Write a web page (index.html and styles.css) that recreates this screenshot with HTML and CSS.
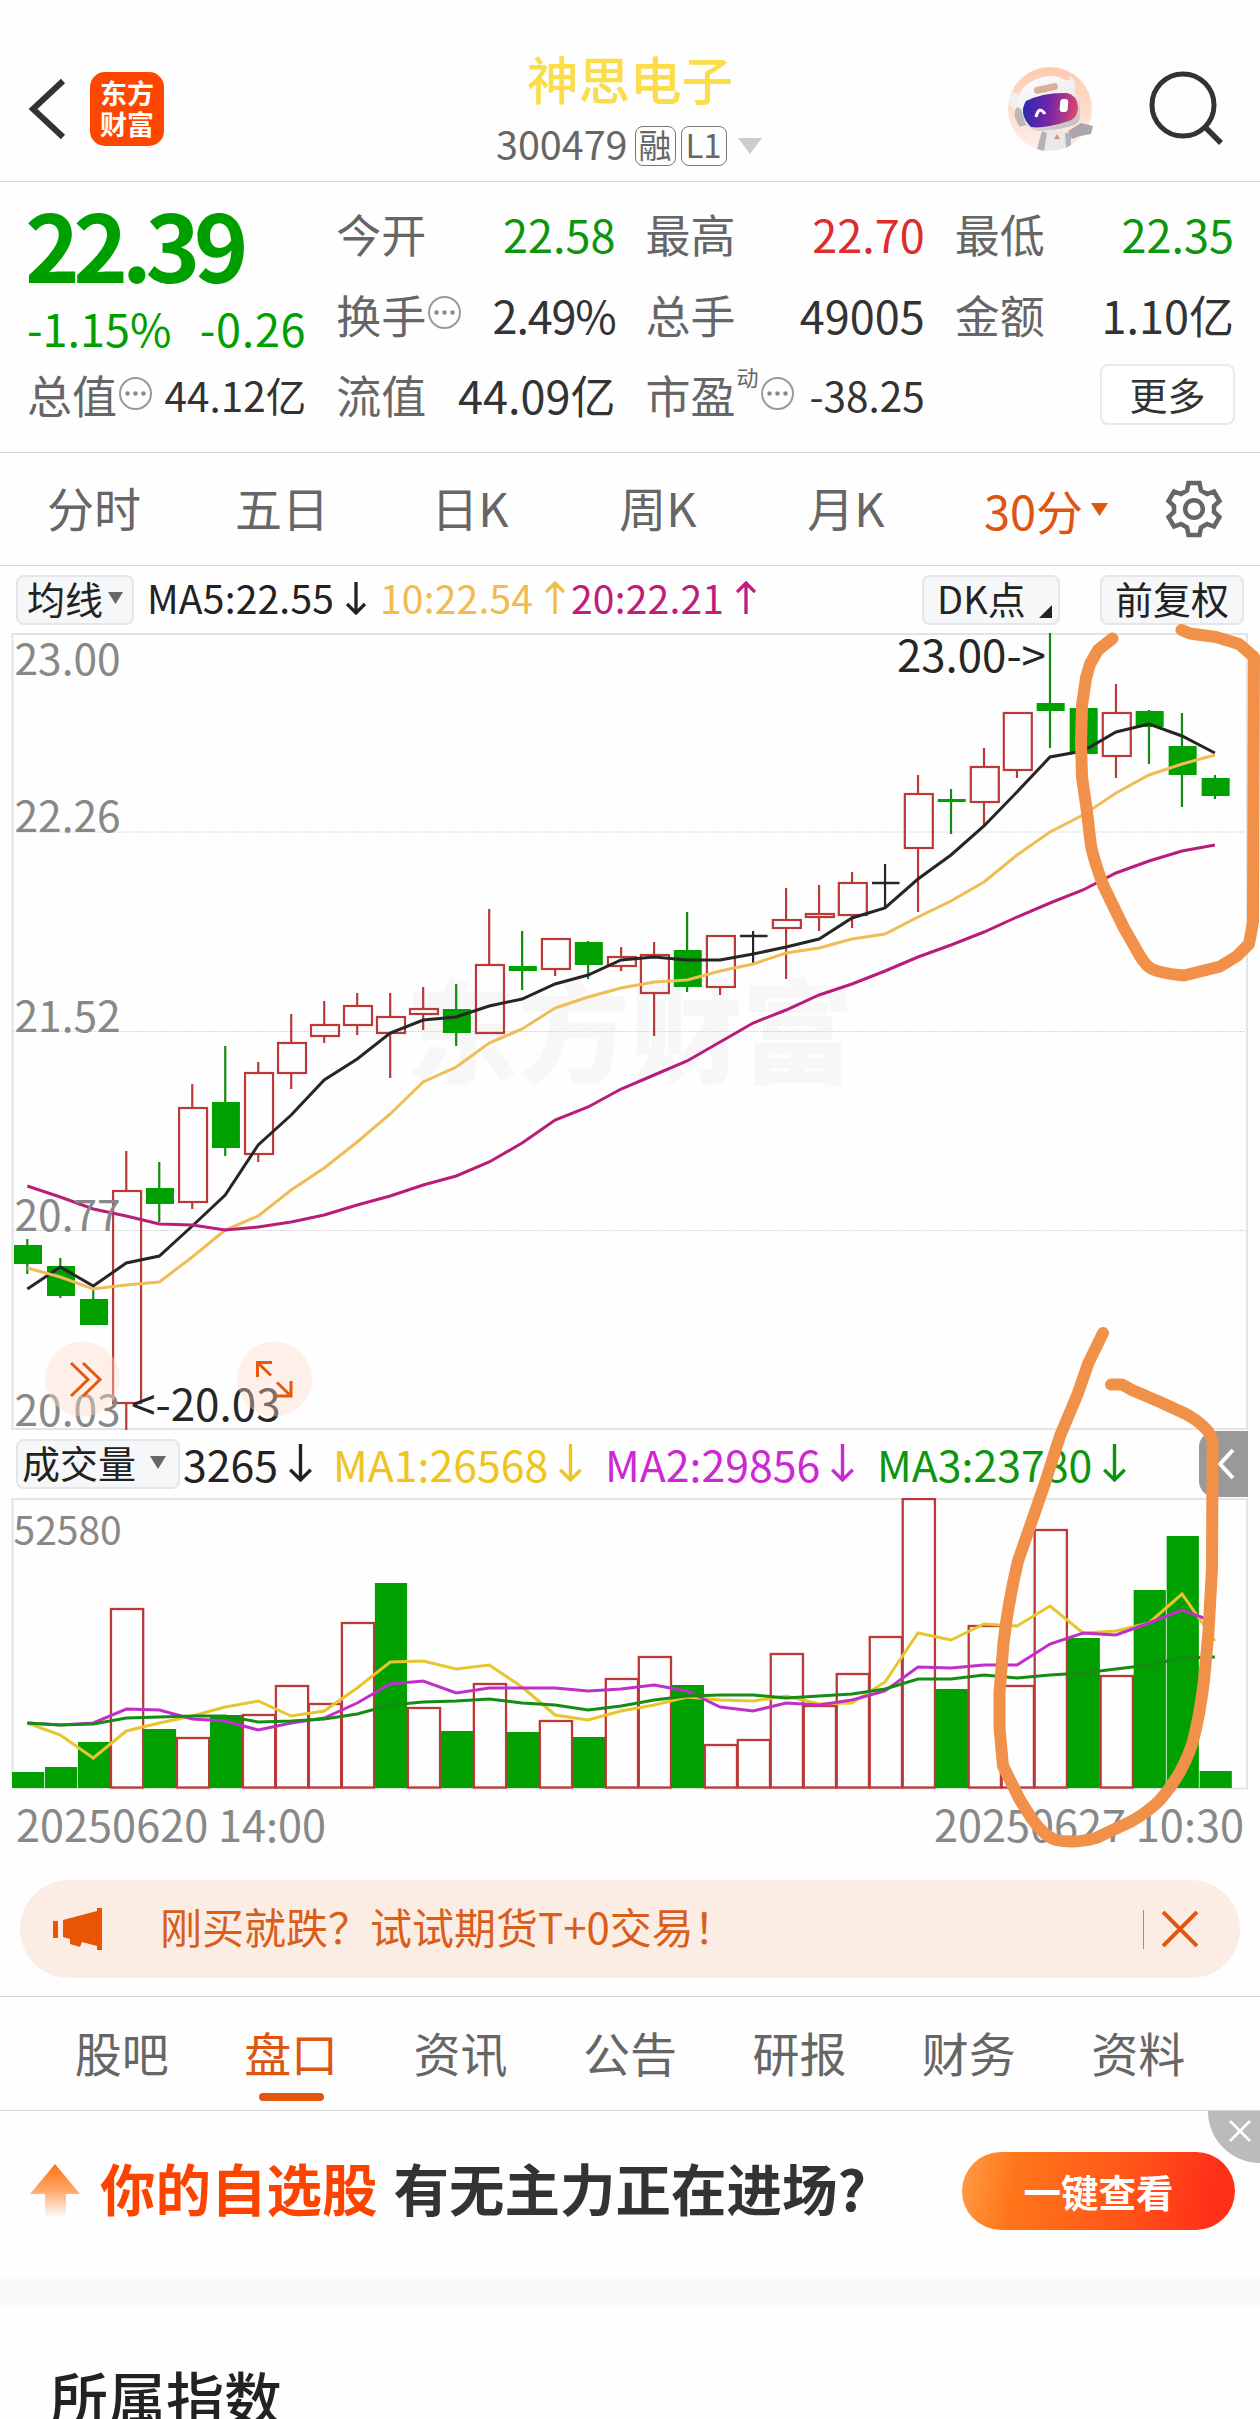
FILE: index.html
```html
<!DOCTYPE html>
<html lang="zh-CN">
<head>
    <meta charset="UTF-8">
    <meta name="viewport" content="width=device-width, initial-scale=1.0">
    <title>神思电子 300479</title>
    <link rel="stylesheet" href="styles.css">
</head>
<body>
    <header class="top-bar">
        <svg class="back" width="42" height="66" viewBox="0 0 42 66"><path d="M36 5L6 33L36 61" fill="none" stroke="#333" stroke-width="6"/></svg>
        <div class="logo">东方<br>财富</div>
        <div class="stock">
            <h1>神思电子</h1>
            <div class="code">
                <span class="num">300479</span>
                <span class="tag">融</span>
                <span class="tag tag-l1">L1</span>
                <svg class="caret" width="24" height="16" viewBox="0 0 24 16"><path d="M0 0H24L12 16Z" fill="#ccc"/></svg>
            </div>
        </div>
        <svg class="robot" width="88" height="88" viewBox="0 0 88 88">
            <defs>
                <linearGradient id="halo" x1="0" y1="0" x2="0" y2="1"><stop offset="0" stop-color="#ffc9ae"/><stop offset="1" stop-color="#fff0e8"/></linearGradient>
                <linearGradient id="visor" x1="0" y1="0.4" x2="1" y2="0.5"><stop offset="0" stop-color="#2a2bb0"/><stop offset="0.5" stop-color="#7a25a5"/><stop offset="1" stop-color="#dd4a6c"/></linearGradient>
                <linearGradient id="shell" x1="0" y1="0" x2="0.6" y2="1"><stop offset="0" stop-color="#fff"/><stop offset="0.6" stop-color="#efeeef"/><stop offset="1" stop-color="#c6c3c6"/></linearGradient>
            </defs>
            <circle cx="44" cy="44" r="42" fill="url(#halo)"/>
            <path d="M5 27Q-1 37 9 45L17 36L11 28ZM58 14Q66 18 63 10Q72 16 68 28Z" fill="#f1eff0"/>
            <path d="M36 66L30 84Q44 88 62 82L64 66Z" fill="#ebe8e9"/>
            <path d="M36 66L31 84L38 86L41 68ZM59 68L60 83L65 80L65 68Z" fill="#b7b2b6"/>
            <path d="M62 66L75 58L87 61L85 69L74 71L66 74Z" fill="#aaa6ab"/>
            <path d="M34 13Q54 6 65 22Q78 37 73 56Q68 64 31 66Q12 59 11 43Q10 20 34 13Z" fill="url(#shell)"/>
            <path d="M11 42Q5 50 14 62L20 60L15 44Z" fill="#bbb7bd"/>
            <rect x="28" y="20" width="24" height="7" rx="3" transform="rotate(-12 40 24)" fill="#d9b097"/>
            <path d="M20 36Q38 27 61 28Q71 30 72 42Q72 53 63 56Q38 64 25 62Q12 49 20 36Z" fill="url(#visor)"/>
            <path d="M30 52Q33 40 39 49" fill="none" stroke="#fff" stroke-width="3"/>
            <rect x="54" y="34" width="8" height="13" rx="3" fill="#fff" transform="rotate(5 58 40)"/>
            <path d="M51 69l3 5h-6Z" fill="#d99468"/>
        </svg>
        <svg class="search" width="76" height="76" viewBox="0 0 76 76"><circle cx="35" cy="35" r="31" fill="none" stroke="#333" stroke-width="5"/><path d="M57 57L73 73" stroke="#333" stroke-width="5.5"/></svg>
    </header>

    <section class="quote">
        <div class="price">
            <div class="price-now">22.39</div>
            <div class="price-change"><span>-1.15%</span><span>-0.26</span></div>
        </div>
        <div class="cell"><label>今开</label><b class="down">22.58</b></div>
        <div class="cell"><label>最高</label><b class="up">22.70</b></div>
        <div class="cell"><label>最低</label><b class="down">22.35</b></div>
        <div class="cell"><label>换手</label><i class="more-dot"></i><b class="pct">2.49%</b></div>
        <div class="cell"><label>总手</label><b>49005</b></div>
        <div class="cell"><label>金额</label><b>1.10亿</b></div>
        <div class="cell small"><label>总值</label><i class="more-dot"></i><b>44.12亿</b></div>
        <div class="cell"><label>流值</label><b>44.09亿</b></div>
        <div class="cell small"><label>市盈</label><sup>动</sup><i class="more-dot"></i><b>-38.25</b></div>
        <div class="cell"><button class="more">更多</button></div>
    </section>

    <nav class="periods">
        <a>分时</a>
        <a>五日</a>
        <a>日K</a>
        <a>周K</a>
        <a>月K</a>
        <a class="active">30分<svg width="17" height="13" viewBox="0 0 17 13"><path d="M0 0H17L8.500 13Z" fill="#e3540c"/></svg></a>
        <a class="setting">
            <svg width="56" height="58" viewBox="0 0 56 58" fill="none" stroke="#666" stroke-width="4.500"><path d="M22.500 3H33.500L35 10.500L41 14L48 11.500L53.500 21L48 26V32L53.500 37L48 46.500L41 44L35 47.500L33.500 55H22.500L21 47.500L15 44L8 46.500L2.500 37L8 32V26L2.500 21L8 11.500L15 14L21 10.500Z"/><circle cx="28" cy="29" r="8.800"/></svg>
        </a>
    </nav>

    <div class="ma-bar">
        <span class="pill pill-ma">均线<svg width="15" height="12" viewBox="0 0 15 12"><path d="M0 0H15L7.500 12Z" fill="#666"/></svg></span>
        <span class="ma ma5">MA5:22.55<svg class="arrow" viewBox="0 0 20 34"><path d="M10 1V32M1 23L10 32L19 23"/></svg></span>
        <span class="ma ma10">10:22.54<svg class="arrow" viewBox="0 0 20 34"><path d="M10 33V2M1 11L10 2L19 11"/></svg></span>
        <span class="ma ma20">20:22.21<svg class="arrow" viewBox="0 0 20 34"><path d="M10 33V2M1 11L10 2L19 11"/></svg></span>
        <span class="pill pill-dk">DK点<svg width="13" height="13" viewBox="0 0 13 13"><path d="M13 0V13H0Z" fill="#222"/></svg></span>
        <span class="pill pill-fq">前复权</span>
    </div>

    <div class="chart">
        <svg id="kline" width="1260" height="797" viewBox="0 634 1260 797"></svg>
        <div class="vol-bar">
            <span class="pill pill-vol">成交量<svg width="16" height="13" viewBox="0 0 16 13"><path d="M0 0H16L8 13Z" fill="#666"/></svg></span>
            <span class="vol v0">3265<svg class="arrow" viewBox="0 0 22 38"><path d="M11 1V36M1 26L11 36L21 26"/></svg></span>
            <span class="vol v1">MA1:26568<svg class="arrow" viewBox="0 0 22 38"><path d="M11 1V36M1 26L11 36L21 26"/></svg></span>
            <span class="vol v2">MA2:29856<svg class="arrow" viewBox="0 0 22 38"><path d="M11 1V36M1 26L11 36L21 26"/></svg></span>
            <span class="vol v3">MA3:23780<svg class="arrow" viewBox="0 0 22 38"><path d="M11 1V36M1 26L11 36L21 26"/></svg></span>
            <span class="fold"><svg width="18" height="32" viewBox="0 0 18 32"><path d="M16 2L3 16L16 30" fill="none" stroke="#fff" stroke-width="4"/></svg></span>
        </div>
        <svg id="volume" width="1260" height="292" viewBox="0 1499 1260 292"></svg>
        <div class="dates"><span>20250620 14:00</span><span>20250627 10:30</span></div>

        <!-- hand drawn marks -->
        <svg class="marks" width="1260" height="1246" viewBox="0 620 1260 1246">
            <path d="M1112.500 638.500L1098 650L1090 664L1086 678L1082 705L1081 743L1082 777L1087 812L1091 846Q1095 864 1104 887L1124 928L1140 956Q1146 966 1152 969Q1160 973 1184 975.500L1220 966.500L1237 956L1249 944L1253 922L1254 657L1239 644L1216 637L1190 633.500L1181.500 630"/>
            <path d="M1103 1333L1088 1364L1078 1393L1060 1436L1044 1486L1018 1561Q1008 1603 1003.500 1643L999.500 1693V1728L1003 1766L1020 1800L1032 1819Q1044 1836 1056 1840Q1074 1844 1096 1838L1132 1821Q1148 1812 1160 1800Q1182 1775 1192.500 1743Q1200 1715 1204 1680L1208.500 1632L1212 1568L1212.500 1457V1443Q1211 1433 1204 1427Q1197 1420 1186 1414L1160 1402L1132 1390L1122 1384.500H1111"/>
        </svg>
    </div>

    <div class="notice">
        <svg class="horn" width="50" height="42" viewBox="0 0 50 42"><path d="M0 13H5V30H0ZM10 12L44 3V0H49V42H44V38L29 34L27 39L17 36V31L10 29Z" fill="#e95504"/></svg>
        <span class="notice-text">刚买就跌？试试期货T+0交易！</span>
        <i class="line"></i>
        <svg width="36" height="36" viewBox="0 0 36 36"><path d="M1 1L35 35M35 1L1 35" stroke="#e3540c" stroke-width="4"/></svg>
    </div>

    <nav class="tabs">
        <a>股吧</a>
        <a class="active">盘口</a>
        <a>资讯</a>
        <a>公告</a>
        <a>研报</a>
        <a>财务</a>
        <a>资料</a>
    </nav>

    <div class="banner">
        <svg width="50" height="54" viewBox="0 0 50 54"><defs><linearGradient id="rise" x1="0" y1="0" x2="0" y2="1"><stop offset="0" stop-color="#ff7010"/><stop offset="0.500" stop-color="#ffaa6c"/><stop offset="1" stop-color="#fff"/></linearGradient></defs><path d="M25 0L50 30H36V54H15V30H0Z" fill="url(#rise)"/></svg>
        <strong class="hot">你的自选股</strong>
        <strong>有无主力正在进场?</strong>
        <button class="go">一键查看</button>
        <span class="close"><svg width="22" height="22" viewBox="0 0 22 22"><path d="M1 1L21 21M21 1L1 21" stroke="#fff" stroke-width="2.500"/></svg></span>
    </div>

    <h2 class="section-title">所属指数</h2>

    <script src="chart.js"></script>
</body>
</html>
```

FILE: styles.css
```css
* {
    box-sizing: border-box;
}
body {
    margin: 0;
    width: 1260px;
    height: 2419px;
    overflow: hidden;
    background: #fefefe;
    color: #333;
    font-family: "Noto Sans CJK SC", "Noto Sans", sans-serif;
}
svg {
    display: block;
    flex: none;
}
b, i, label {
    font-weight: 400;
    font-style: normal;
}
button {
    font-family: inherit;
    padding: 0;
}

/* header */
.top-bar {
    display: flex;
    height: 182px;
    border-bottom: 1.500px solid #d4d6d6;
}
.back {
    margin: 76px 0 0 27px;
}
.logo {
    width: 74px;
    height: 74px;
    margin: 72px 0 0 21px;
    padding-top: 5px;
    border-radius: 15px;
    background: #fd4600;
    color: #fff;
    font-size: 27px;
    font-weight: 700;
    line-height: 31px;
    text-align: center;
}
.stock {
    flex: 1;
    margin-left: 22px;
}
.stock h1 {
    margin: 50px 0 0 341px;
    font-size: 51.500px;
    font-weight: 500;
    line-height: 56px;
    color: #fbdc4a;
    white-space: nowrap;
}
.code {
    display: flex;
    align-items: center;
    margin: 16px 0 0 310px;
    height: 47px;
    font-size: 39.500px;
    color: #666;
}
.num {
    margin-bottom: 6px;
}
.tag {
    width: 41px;
    height: 40px;
    margin: 1px 0 0 7px;
    border: 1.500px solid #777;
    border-radius: 8px;
    font-size: 33px;
    line-height: 34px;
    text-align: center;
}
.tag-l1 {
    width: 46px;
    margin-left: 5px;
}
.caret {
    margin-left: 11px;
}
.robot {
    margin: 65px 0 0;
}
.search {
    margin: 70px 36px 0 54px;
}

/* quote */
.quote {
    display: grid;
    grid-template-columns: repeat(4, 1fr);
    grid-template-rows: repeat(3, 80.500px);
    column-gap: 30px;
    height: 271px;
    padding: 12px 26px 0 27px;
    border-bottom: 1.500px solid #d4d6d6;
    font-size: 45px;
}
.price {
    grid-row: span 2;
    color: #009f00;
}
.price-now {
    margin-top: 7px;
    font-size: 93px;
    font-weight: 700;
    line-height: 84px;
    letter-spacing: -6.500px;
    margin-left: -2px;
}
.price-change {
    display: flex;
    justify-content: space-between;
    margin-top: 13px;
    line-height: 60px;
}
.price-change span:last-child {
    letter-spacing: 0.700px;
}
.cell {
    display: flex;
    align-items: center;
    line-height: 60px;
    white-space: nowrap;
}
.cell label {
    color: #666;
}
.cell b {
    margin-left: auto;
}
.cell .pct {
    letter-spacing: -1.200px;
}
.cell.small b {
    font-size: 40.500px;
}
.cell sup {
    align-self: flex-start;
    margin: 10px 0 0 1px;
    font-size: 22px;
    line-height: 22px;
    color: #666;
}
.cell .down {
    color: #0d960d;
}
.cell .up {
    color: #dc2c2c;
}
.more-dot {
    width: 33px;
    height: 33px;
    margin: -4px 0 0 2px;
    border: 2.500px solid #999;
    border-radius: 50%;
    background: radial-gradient(circle, #888 1.800px, transparent 2.600px) center / 8px 33px;
    background-clip: content-box;
    padding: 0 2px;
}
.more {
    width: 135px;
    height: 61px;
    margin: 0 -1px 2px auto;
    border: 2px solid #e9e9eb;
    border-radius: 8px;
    background: #fff;
    color: #333;
    font-size: 38px;
    line-height: 52px;
}

/* period tabs */
.periods {
    display: flex;
    height: 113px;
    border-bottom: 1.500px solid #d4d6d6;
    font-size: 47px;
    line-height: 108px;
    color: #666;
}
.periods a {
    width: 188px;
    text-align: center;
}
.periods .active {
    display: flex;
    align-items: center;
    justify-content: center;
    width: 212px;
    color: #dd560f;
    line-height: 105px;
}
.periods .active svg {
    margin-left: 8px;
}
.periods .setting {
    width: 84px;
    padding: 27px 14px 0;
}

/* indicator rows */
.ma-bar,
.vol-bar {
    display: flex;
    align-items: center;
    color: #222;
}
.ma-bar {
    height: 67px;
    padding: 0 16px;
    font-size: 39px;
}
.pill {
    display: flex;
    align-items: center;
    height: 50px;
    border: 2px solid #e4e6e9;
    border-radius: 8px;
    background: #f6f7f9;
    font-size: 38px;
    line-height: 40px;
    padding-bottom: 4px;
    white-space: nowrap;
}
.pill-ma {
    width: 118px;
    padding-left: 9px;
}
.pill-ma svg {
    margin-left: 5px;
}
.pill-dk {
    width: 138px;
    margin-left: auto;
    padding-left: 13px;
}
.pill-dk svg {
    margin: 28px 0 0 13px;
}
.pill-fq {
    width: 144px;
    margin-left: 40px;
    justify-content: center;
}
.ma,
.vol {
    display: flex;
    align-items: center;
    line-height: 50px;
}
.ma {
    margin-bottom: 5px;
    letter-spacing: 0.200px;
}
.vol {
    margin-bottom: 3px;
}
.arrow {
    fill: none;
    stroke: currentColor;
    stroke-width: 3.300px;
}
.ma .arrow {
    width: 20px;
    height: 34px;
    margin: 2px 0 0 12px;
}
.ma5 {
    width: 233px;
    margin-left: 13px;
}
.ma10 {
    width: 191px;
    color: #f2bb4f;
}
.ma20 {
    color: #c01c7c;
}

/* charts */
.chart {
    position: relative;
}
.chart text {
    font-family: "Noto Sans CJK SC", sans-serif;
}
.vol-bar {
    height: 68px;
    padding-left: 16px;
    font-size: 42.800px;
}
.pill-vol {
    width: 164px;
    padding-left: 4px;
}
.pill-vol svg {
    margin-left: 14px;
}
.vol .arrow {
    width: 23px;
    height: 39px;
    margin-left: 11px;
}
.v0 {
    width: 150px;
    margin-left: 3px;
}
.v1 {
    width: 272px;
    color: #efc41e;
}
.v2 {
    width: 272px;
    color: #cc28d4;
}
.v3 {
    color: #0d960d;
}
.fold {
    width: 49px;
    height: 66px;
    margin: 0 12px 0 auto;
    padding: 17px 0 0 18px;
    border-radius: 16px 0 0 16px;
    background: #999;
}
.dates {
    display: flex;
    justify-content: space-between;
    height: 90px;
    padding: 3px 16px 0;
    font-size: 43.300px;
    line-height: 60px;
    color: #888;
}
.marks {
    position: absolute;
    left: 0;
    top: -13px;
    fill: none;
    stroke: #f19149;
    stroke-width: 12px;
    stroke-linecap: round;
    stroke-linejoin: round;
}

/* notice */
.notice {
    display: flex;
    align-items: center;
    width: 1220px;
    height: 98px;
    margin: 0 20px 18px;
    padding: 0 42px 0 33px;
    border-radius: 49px;
    background: #fcede4;
    color: #d95e1a;
}
.notice-text {
    margin: -6px auto 0 57px;
    font-size: 42px;
    line-height: 60px;
}
.line {
    width: 1.500px;
    height: 39px;
    margin-right: 18px;
    background: #d08050;
}

/* lower tabs */
.tabs {
    display: flex;
    height: 115px;
    padding: 0 37px;
    border-top: 1.500px solid #d4d6d6;
    border-bottom: 1.500px solid #d4d6d6;
    font-size: 47px;
    line-height: 109px;
    color: #666;
}
.tabs a {
    flex: 1;
    height: 104px;
    text-align: center;
}
.tabs .active {
    color: #dd560f;
}
.tabs .active::after {
    content: "";
    display: block;
    width: 65px;
    height: 8px;
    margin: -13px auto 0;
    border-radius: 4px;
    background: #e3540c;
}

/* banner */
.banner {
    position: relative;
    display: flex;
    align-items: center;
    height: 194px;
    padding: 0 25px 8px 30px;
    border-bottom: 26px solid #f7f8fa;
    font-size: 55.500px;
    line-height: 80px;
    white-space: nowrap;
}
.banner strong {
    margin-bottom: 9px;
}
.banner .hot {
    margin: 0 16px 9px 20px;
    color: #fb4400;
}
.go {
    width: 273px;
    height: 78px;
    margin-left: auto;
    border: 0;
    border-radius: 39px;
    background: linear-gradient(100deg, #ff9c44, #ff761a 20%, #ff5518 60%, #ff3018 90%);
    color: #fff;
    font-size: 37.500px;
    font-weight: 700;
    line-height: 72px;
}
.close {
    position: absolute;
    top: 0;
    right: 0;
    width: 52px;
    height: 52px;
    padding: 9px 0 0 21px;
    border-radius: 0 0 0 52px;
    background: #bbb;
}
.section-title {
    margin: 56px 0 0 50px;
    font-size: 58px;
    font-weight: 500;
    line-height: 70px;
    color: #222;
}
```

FILE: chart.js
```js
const RED = "#bb3a38";
const GREEN = "#00a000";
const BLACK = "#262626";
const STEP = 32.99;

// type, high, low, body top, body bottom
const candles = [
    ["g", 1240, 1275, 1246, 1265], ["g", 1259, 1299, 1267, 1297], ["g", 1286, 1326, 1300, 1326],
    ["r", 1152, 1431, 1192, 1404], ["g", 1163, 1223, 1189, 1205], ["r", 1085, 1210, 1109, 1203],
    ["g", 1047, 1157, 1103, 1149], ["r", 1063, 1163, 1074, 1155], ["r", 1015, 1090, 1044, 1074],
    ["r", 1002, 1044, 1026, 1037], ["r", 994, 1036, 1007, 1026], ["r", 994, 1079, 1018, 1034],
    ["r", 988, 1031, 1010, 1015], ["g", 985, 1047, 1010, 1034], ["r", 910, 1034, 966, 1034],
    ["g", 932, 991, 967, 972], ["r", 940, 977, 940, 970], ["g", 942, 980, 943, 966],
    ["r", 948, 972, 958, 967], ["r", 943, 1037, 956, 994], ["g", 913, 993, 951, 988],
    ["r", 937, 996, 937, 988], ["b", 932, 964, 937, 937], ["r", 889, 980, 921, 929],
    ["r", 886, 932, 915, 918], ["r", 873, 929, 884, 916], ["b", 865, 909, 884, 884],
    ["r", 776, 913, 795, 849], ["g", 790, 835, 800, 803], ["r", 749, 826, 768, 803],
    ["r", 714, 779, 714, 771], ["g", 634, 749, 704, 712], ["g", 709, 755, 709, 755],
    ["r", 685, 779, 714, 757], ["g", 711, 765, 712, 728], ["g", 714, 808, 747, 776],
    ["g", 776, 800, 779, 797]
];
const ma5 = [1290, 1268, 1287, 1264, 1257, 1227, 1196, 1146, 1116, 1081, 1060, 1034, 1021, 1018, 1007, 1000, 985, 976, 961, 958, 961, 961, 955, 948, 940, 919, 909, 880, 856, 827, 793, 758, 752, 733, 725, 737, 754];
const ma10 = [1269, 1278, 1290, 1286, 1283, 1258, 1231, 1217, 1191, 1169, 1143, 1115, 1083, 1068, 1044, 1030, 1009, 998, 989, 983, 981, 972, 965, 954, 949, 940, 935, 918, 902, 883, 856, 833, 816, 794, 776, 765, 756];
const ma20 = [1187, 1198, 1210, 1217, 1225, 1226, 1231, 1228, 1223, 1216, 1206, 1197, 1186, 1177, 1163, 1144, 1121, 1108, 1090, 1076, 1062, 1043, 1024, 1011, 996, 985, 972, 958, 946, 933, 918, 904, 891, 874, 862, 852, 846];

const volumes = [1773, 1768, 1743, 1609, 1730, 1738, 1716, 1715, 1686, 1704, 1623, 1584, 1708, 1732, 1684, 1733, 1721, 1738, 1679, 1657, 1686, 1745, 1740, 1654, 1706, 1674, 1637, 1499, 1690, 1626, 1686, 1530, 1639, 1676, 1591, 1537, 1772];
const volumeDown = [0, 1, 2, 4, 6, 11, 13, 15, 17, 20, 28, 32, 34, 35, 36];
const vma1 = [1724, 1736, 1759, 1732, 1724, 1717, 1708, 1702, 1717, 1712, 1689, 1663, 1662, 1670, 1666, 1688, 1716, 1721, 1712, 1706, 1698, 1701, 1702, 1697, 1705, 1704, 1683, 1634, 1641, 1625, 1627, 1607, 1634, 1632, 1624, 1595, 1642];
const vma2 = [1724, 1726, 1724, 1710, 1711, 1720, 1722, 1731, 1724, 1719, 1704, 1685, 1682, 1694, 1689, 1689, 1689, 1692, 1690, 1686, 1692, 1708, 1712, 1704, 1706, 1701, 1692, 1668, 1669, 1666, 1666, 1645, 1634, 1636, 1624, 1611, 1623];
const vma3 = [1724, 1726, 1725, 1719, 1718, 1717, 1717, 1723, 1722, 1720, 1715, 1706, 1703, 1702, 1700, 1704, 1706, 1711, 1707, 1701, 1697, 1696, 1696, 1699, 1697, 1695, 1690, 1680, 1680, 1676, 1679, 1676, 1674, 1670, 1666, 1659, 1658];

function centerX(i) {
    return 27.3 + i * STEP;
}

function line(x1, y1, x2, y2, color, width) {
    return `<line x1="${x1}" y1="${y1}" x2="${x2}" y2="${y2}" stroke="${color}" stroke-width="${width}"/>`;
}

function curve(ys, color) {
    const points = ys.map((y, i) => centerX(i).toFixed(1) + "," + y).join(" ");
    return `<polyline points="${points}" fill="none" stroke="${color}" stroke-width="3"/>`;
}

function label(x, y, text, size, color) {
    return `<text x="${x}" y="${y}" font-size="${size}" fill="${color}">${text}</text>`;
}

function drawKline() {
    let out = `<text x="406" y="1076" font-size="112" font-weight="900" fill="#f7f7f7">东方财富</text>`;
    [833, 1032.5, 1231.5].forEach(y => {
        out += `<path d="M13 ${y}H1247" stroke="#ccc" stroke-width="1" stroke-dasharray="1.5 1.5"/>`;
    });
    out += `<path d="M12.5 635H1247V1430H12.5Z" fill="none" stroke="#e3e3e3" stroke-width="2"/>`;

    candles.forEach(([type, high, low, top, bottom], i) => {
        const x = centerX(i);
        if (type === "g") {
            out += line(x, high, x, low, "#108c10", 2.2);
            out += `<rect x="${x - 13.3}" y="${top}" width="28" height="${bottom - top}" fill="${GREEN}"/>`;
        } else if (type === "r") {
            out += line(x, high, x, top, RED, 2.2) + line(x, bottom, x, low, RED, 2.2);
            out += `<rect x="${x - 13.2}" y="${top}" width="28" height="${bottom - top}" fill="none" stroke="${RED}" stroke-width="2.2"/>`;
        } else {
            out += line(x, high, x, low, BLACK, 2.2) + line(x - 13, top, x + 14.5, top, BLACK, 2.5);
        }
    });
    out += curve(ma5, BLACK) + curve(ma10, "#efbc55") + curve(ma20, "#ba1d79");

    out += label(14.5, 676, "23.00", 42.5, "#888");
    out += label(14.5, 833, "22.26", 42.5, "#888");
    out += label(14.5, 1032.5, "21.52", 42.5, "#888");
    out += label(14.5, 1231.5, "20.77", 42.5, "#888");
    out += label(14.5, 1427, "20.03", 42.5, "#888");
    out += label(897, 673, "23.00-&gt;", 43.8, BLACK);
    out += label(131, 1422, "&lt;-20.03", 44, BLACK);

    // floating buttons
    out += `<circle cx="82.500" cy="1380" r="37.500" fill="#ffdccb" fill-opacity="0.4"/><circle cx="274.500" cy="1380" r="37.500" fill="#ffdccb" fill-opacity="0.4"/>`;
    out += `<g fill="none" stroke="#e2590f" stroke-width="3"><path d="M71 1364L88 1380.500L71 1397M83 1364L100 1380.500L83 1397"/><path d="M272 1363.500H257.500V1378M257.500 1363.500L271 1376.500M277 1383.500L291 1397M291 1382V1397H276"/></g>`;
    document.getElementById("kline").innerHTML = out;
}

function drawVolume() {
    let out = `<path d="M12.5 1500H1247V1789.5H12.5Z" fill="none" stroke="#e3e3e3" stroke-width="2"/>`;
    volumes.forEach((top, i) => {
        const x = 12 + i * STEP;
        if (volumeDown.includes(i)) {
            out += `<rect x="${x}" y="${top}" width="32.200" height="${1789 - top}" fill="${GREEN}"/>`;
        } else {
            out += `<rect x="${x}" y="${top + 1}" width="32.200" height="${1787.5 - top}" fill="none" stroke="${RED}" stroke-width="2.300"/>`;
        }
    });
    out += curve(vma1, "#e6c62c") + curve(vma2, "#c02fc8") + curve(vma3, "#168c16");
    out += label(13.5, 1546, "52580", 39, "#888");
    document.getElementById("volume").innerHTML = out;
}

drawKline();
drawVolume();
```
